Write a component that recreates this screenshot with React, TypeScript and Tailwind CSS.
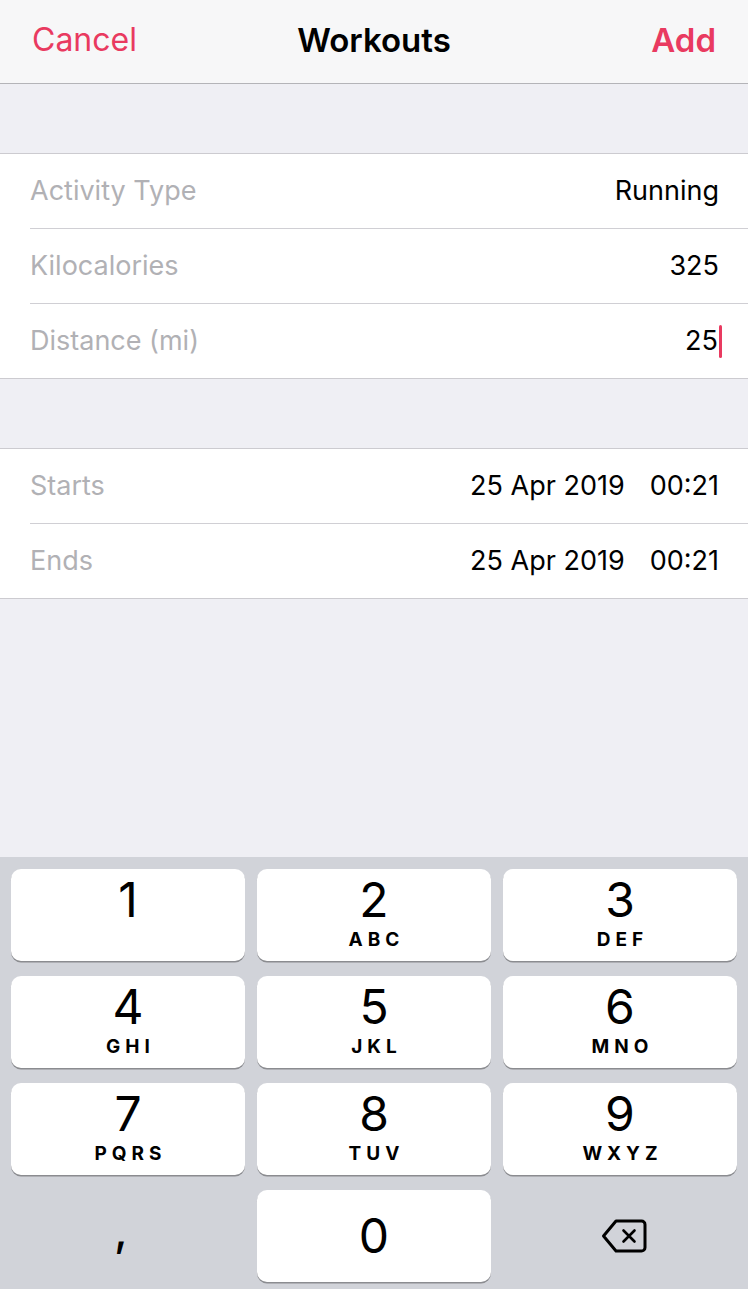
import { Fragment } from "react";

const PINK = "text-[#e93a60]";

const keys = [
  { d: "1", l: "" },
  { d: "2", l: "ABC" },
  { d: "3", l: "DEF" },
  { d: "4", l: "GHI" },
  { d: "5", l: "JKL" },
  { d: "6", l: "MNO" },
  { d: "7", l: "PQRS" },
  { d: "8", l: "TUV" },
  { d: "9", l: "WXYZ" },
];

const Row = ({ label, children }: { label: string; children: React.ReactNode }) => (
  <div className="flex h-[74px] items-center justify-between pl-[30px] pr-[29px]">
    <span className="text-[27px] leading-[32px] text-[#b1b1b5]">{label}</span>
    <div className="flex items-center text-[27px] leading-[32px] text-black">{children}</div>
  </div>
);

const Sep = () => (
  <div className="pl-[30px]">
    <div className="h-px bg-[#d0cfd4]" />
  </div>
);

const Group = ({ rows }: { rows: { label: string; value: React.ReactNode }[] }) => (
  <div className="border-y border-[#cccbd0] bg-white">
    {rows.map((r, i) => (
      <Fragment key={r.label}>
        {i > 0 && <Sep />}
        <Row label={r.label}>{r.value}</Row>
      </Fragment>
    ))}
  </div>
);

const DateValue = () => (
  <div className="flex gap-[25px]">
    <span>25 Apr 2019</span>
    <span>00:21</span>
  </div>
);

const DeleteIcon = () => (
  <svg width="46" height="34" viewBox="0 0 46 34" fill="none">
    <path
      d="M15 2H40.5a3.5 3.5 0 0 1 3.5 3.5V28.5a3.5 3.5 0 0 1-3.5 3.5H15L2.5 17Z"
      stroke="black"
      strokeWidth="3"
      strokeLinejoin="round"
    />
    <path d="M22.5 11.5L33.5 22.5M33.5 11.5L22.5 22.5" stroke="black" strokeWidth="2.6" strokeLinecap="round" />
  </svg>
);

export default function App() {
  return (
    <div className="flex h-[1289px] w-[748px] flex-col overflow-hidden bg-[#efeff4] font-['Inter','Liberation_Sans',sans-serif]">
      {/* nav bar */}
      <header className="grid h-[84px] grid-cols-3 items-center border-b border-[#b4b4b8] bg-[#f7f7f8] px-[32px] pb-[4px] text-[33px] leading-[40px]">
        <span className={`${PINK} text-[32px]`}>Cancel</span>
        <span className="text-center font-semibold text-black">Workouts</span>
        <span className={`${PINK} text-right font-semibold`}>Add</span>
      </header>

      <div className="h-[69px]" />
      <Group
        rows={[
          { label: "Activity Type", value: <span>Running</span> },
          { label: "Kilocalories", value: <span>325</span> },
          {
            label: "Distance (mi)",
            value: (
              <>
                <span>25</span>
                <span className="-mr-[3px] ml-px h-[33px] w-[3px] rounded-full bg-[#e93a60]" />
              </>
            ),
          },
        ]}
      />

      <div className="h-[69px]" />
      <Group
        rows={[
          { label: "Starts", value: <DateValue /> },
          { label: "Ends", value: <DateValue /> },
        ]}
      />

      <div className="flex-1" />

      {/* number pad */}
      <div className="h-[432px] bg-[#d1d3d9] px-[11px] pt-[12px]">
        <div className="grid grid-cols-3 gap-x-[12px] gap-y-[15px]">
          {keys.map((k) => (
            <div
              key={k.d}
              className="flex h-[92px] flex-col items-center rounded-[10px] bg-white pt-[7px] shadow-[0_1.5px_0_#8b8c90]"
            >
              <span className="text-[48px] leading-[48px] text-black">{k.d}</span>
              <span className="mt-[6px] pl-[5px] text-[19px] font-bold leading-[19px] tracking-[5px] text-black">
                {k.l}
              </span>
            </div>
          ))}
          <div className="flex h-[92px] items-center justify-center pr-[14px]">
            <span className="pb-[12px] text-[44px] font-medium leading-[44px] text-black">,</span>
          </div>
          <div className="flex h-[92px] items-center justify-center rounded-[10px] bg-white shadow-[0_1.5px_0_#8b8c90]">
            <span className="text-[48px] leading-[48px] text-black">0</span>
          </div>
          <div className="flex h-[92px] items-center justify-center pl-[8px]">
            <DeleteIcon />
          </div>
        </div>
      </div>
    </div>
  );
}
